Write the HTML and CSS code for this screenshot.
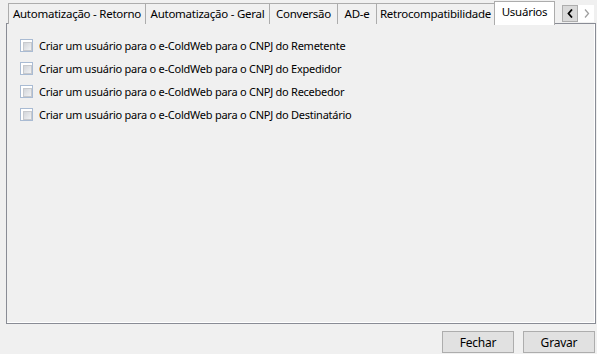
FILE: index.html
```html
<!DOCTYPE html>
<html lang="pt-BR">
<head>
    <meta charset="UTF-8">
    <meta name="viewport" content="width=device-width, initial-scale=1.0">
    <title>Configurações</title>
    <link rel="stylesheet" href="styles.css">
</head>
<body>
    <div class="window">
        <div class="tabstrip">
            <div class="tab tab-retorno">Automatização - Retorno</div>
            <div class="tab tab-geral">Automatização - Geral</div>
            <div class="tab tab-conversao">Conversão</div>
            <div class="tab tab-ade">AD-e</div>
            <div class="tab tab-retro">Retrocompatibilidade</div>
            <div class="tab tab-usuarios active">Usuários</div>
            <div class="scroller">
                <span class="scroll-btn pressed">
                    <svg width="7" height="9" viewBox="0 0 7 9"><path d="M5 0.5 L1.5 4.5 L5 8.5" fill="none" stroke="#000" stroke-width="1.8"/></svg>
                </span>
                <span class="scroll-btn">
                    <svg width="7" height="9" viewBox="0 0 7 9"><path d="M2 0.5 L5.5 4.5 L2 8.5" fill="none" stroke="#a0a0a0" stroke-width="1.3"/></svg>
                </span>
            </div>
        </div>

        <div class="panel">
            <label class="check-row"><span class="checkbox"></span>Criar um usuário para o e-ColdWeb para o CNPJ do Remetente</label>
            <label class="check-row"><span class="checkbox"></span>Criar um usuário para o e-ColdWeb para o CNPJ do Expedidor</label>
            <label class="check-row"><span class="checkbox"></span>Criar um usuário para o e-ColdWeb para o CNPJ do Recebedor</label>
            <label class="check-row"><span class="checkbox"></span>Criar um usuário para o e-ColdWeb para o CNPJ do Destinatário</label>
        </div>

        <div class="actions">
            <button class="btn">Fechar</button>
            <button class="btn">Gravar</button>
        </div>
    </div>
</body>
</html>
```

FILE: styles.css
```css
* {
    margin: 0;
    padding: 0;
    box-sizing: border-box;
}

body {
    font-family: 'Noto Sans', sans-serif;
    font-size: 11px;
    letter-spacing: -0.25px;
    color: #000;
    background: #f0f0f0;
    width: 597px;
    height: 354px;
    overflow: hidden;
}

.window {
    padding: 1px 0 0 6px;
}

.tabstrip {
    display: flex;
    align-items: flex-end;
    height: 23px;
    padding-left: 2px;
    margin-bottom: -1px;
    position: relative;
    z-index: 1;
}

.tab {
    height: 21px;
    line-height: 19px;
    border: 1px solid #acacac;
    border-bottom: none;
    margin-right: -1px;
    background: #f0f0f0;
    white-space: nowrap;
    text-align: center;
    font-size: 11.5px;
}

.tab-retorno { width: 138px; }
.tab-geral { width: 125px; }
.tab-conversao { width: 69px; }
.tab-ade { width: 40px; }
.tab-retro { width: 119px; }

.tab.active {
    width: 61px;
    height: 24px;
    margin-bottom: -1px;
    margin-right: 0;
    background: #fff;
    line-height: 20px;
}

.scroller {
    display: flex;
    margin-left: 7px;
    align-self: flex-start;
    margin-top: 4px;
}

.scroll-btn {
    width: 16px;
    height: 17px;
    display: flex;
    align-items: center;
    justify-content: center;
    background: #fff;
}

.scroll-btn.pressed {
    background: #d9d9d9;
    border: 1px solid #adadad;
}

.panel {
    width: 590px;
    height: 301px;
    border: 1px solid #898c95;
    box-shadow: inset -1px -1px 0 #fff;
    padding: 15px 0 0 13px;
    display: flex;
    flex-direction: column;
    gap: 10px;
}

.check-row {
    display: flex;
    align-items: center;
    gap: 6px;
    height: 13px;
    white-space: nowrap;
}

.checkbox {
    width: 13px;
    height: 13px;
    border: 1px solid #a9bbd3;
    background: #fff;
    padding: 2px;
    flex-shrink: 0;
}

.checkbox::before {
    content: "";
    display: block;
    width: 7px;
    height: 7px;
    background: linear-gradient(135deg, #d2d5da 0%, #f1f2f4 100%);
    border: 1px solid #c7c9cd;
}

.actions {
    display: flex;
    justify-content: flex-end;
    gap: 9px;
    padding: 7px 2px 0 0;
}

.btn {
    width: 72px;
    height: 22px;
    font-family: inherit;
    font-size: 12px;
    letter-spacing: -0.2px;
    background: #e1e1e1;
    border: 1px solid #adadad;
    color: #000;
}
```
